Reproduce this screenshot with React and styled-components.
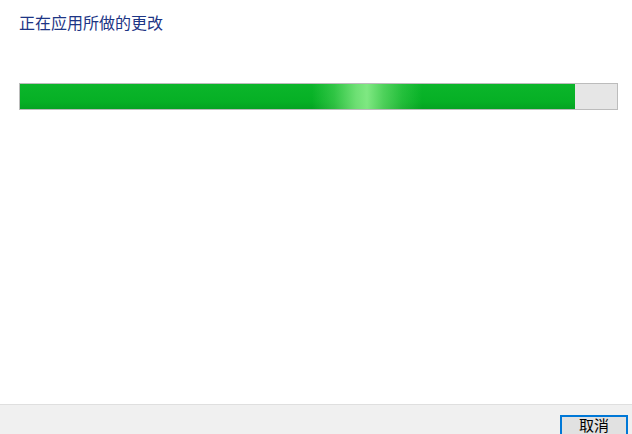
import React from "react";
import styled, { createGlobalStyle } from "styled-components";

const GlobalStyle = createGlobalStyle`
  html, body {
    margin: 0;
    padding: 0;
    background: #ffffff;
  }
  body {
    font-family: "Noto Sans CJK SC", "Noto Sans", sans-serif;
  }
`;

const Window = styled.div`
  width: 632px;
  height: 434px;
  display: flex;
  flex-direction: column;
  overflow: hidden;
  background: #ffffff;
`;

const Content = styled.div`
  flex: 1;
  padding: 11px 14px 0 19px;
`;

const Title = styled.div`
  font-size: 16px;
  line-height: 22px;
  color: #1d3585;
  font-weight: 400;
`;

const Track = styled.div`
  position: relative;
  margin-top: 50px;
  height: 25px;
  border: 1px solid #bcbcbc;
  background: #e6e6e6;
  overflow: hidden;
`;

const Fill = styled.div`
  position: relative;
  height: 100%;
  background: linear-gradient(to bottom, #0bb52b 0%, #06b025 70%, #05a322 100%);
  overflow: hidden;
`;

const Glow = styled.div`
  position: absolute;
  top: 0;
  bottom: 0;
  left: ${(p) => p.$at}px;
  width: 110px;
  background: linear-gradient(
    to right,
    rgba(120, 230, 120, 0) 0%,
    rgba(120, 230, 120, 0.35) 20%,
    rgba(135, 235, 135, 0.8) 40%,
    rgba(140, 238, 140, 0.9) 50%,
    rgba(125, 230, 125, 0.6) 65%,
    rgba(120, 230, 120, 0.25) 82%,
    rgba(120, 230, 120, 0) 100%
  );
`;

const Footer = styled.div`
  height: 30px;
  box-sizing: border-box;
  border-top: 1px solid #dfdfdf;
  background: #f0f0f0;
  display: flex;
  justify-content: flex-end;
  align-items: flex-start;
  padding: 10px 4px 0 0;
  overflow: hidden;
`;

const Button = styled.button`
  width: 68px;
  height: 24px;
  box-sizing: border-box;
  border: 2px solid #0078d7;
  background: #e1e1e1;
  display: flex;
  justify-content: center;
  align-items: flex-start;
  font-family: "Noto Sans CJK SC", sans-serif;
  font-size: 15px;
  line-height: 16px;
  color: #000000;
  padding: 0;
`;

const progress = 555;

export default function App() {
  return (
    <>
      <GlobalStyle />
      <Window>
        <Content>
          <Title>正在应用所做的更改</Title>
          <Track>
            <Fill style={{ width: progress }}>
              <Glow $at={292} />
            </Fill>
          </Track>
        </Content>
        <Footer>
          <Button>取消</Button>
        </Footer>
      </Window>
    </>
  );
}
